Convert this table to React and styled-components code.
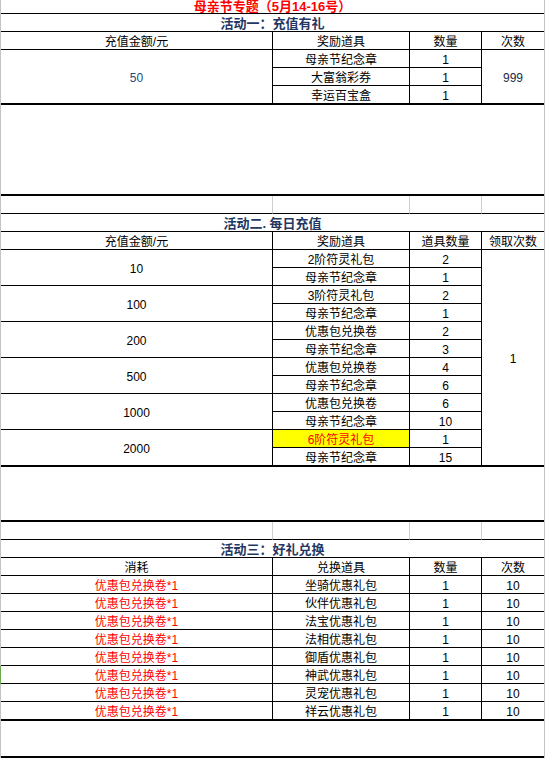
import React from "react";
import styled, { createGlobalStyle } from "styled-components";

const GlobalStyle = createGlobalStyle`
  html, body {
    margin: 0;
    padding: 0;
    background: #ffffff;
  }
`;

const FONT = `"Liberation Sans", "Noto Sans CJK SC", sans-serif`;

const activity2 = [
  { amount: "10", items: [["2阶符灵礼包", "2"], ["母亲节纪念章", "1"]] },
  { amount: "100", items: [["3阶符灵礼包", "2"], ["母亲节纪念章", "1"]] },
  { amount: "200", items: [["优惠包兑换卷", "2"], ["母亲节纪念章", "3"]] },
  { amount: "500", items: [["优惠包兑换卷", "4"], ["母亲节纪念章", "6"]] },
  { amount: "1000", items: [["优惠包兑换卷", "6"], ["母亲节纪念章", "10"]] },
  { amount: "2000", items: [["6阶符灵礼包", "1", true], ["母亲节纪念章", "15"]] },
];

const exchange = [
  "坐骑优惠礼包",
  "伙伴优惠礼包",
  "法宝优惠礼包",
  "法相优惠礼包",
  "御盾优惠礼包",
  "神武优惠礼包",
  "灵宠优惠礼包",
  "祥云优惠礼包",
];

export default function App() {
  return (
    <>
      <GlobalStyle />
      <Sheet>
        <PageTitle>母亲节专题（5月14-16号）</PageTitle>
        <SectionTitle>活动一：充值有礼</SectionTitle>
        <Grid>
          <Cell>充值金额/元</Cell>
          <Cell>奖励道具</Cell>
          <Cell>数量</Cell>
          <Cell $last>次数</Cell>

          <Cell $span={3} $color="#244a7c">50</Cell>
          <Cell>母亲节纪念章</Cell>
          <Cell>1</Cell>
          <Cell $span={3} $last $color="#1b2b45">999</Cell>
          <Cell>大富翁彩券</Cell>
          <Cell>1</Cell>
          <Cell>幸运百宝盒</Cell>
          <Cell>1</Cell>
        </Grid>
        <Spacer $height={89} />

        <BlankRow />
        <SectionTitle>活动二. 每日充值</SectionTitle>
        <Grid>
          <Cell>充值金额/元</Cell>
          <Cell>奖励道具</Cell>
          <Cell>道具数量</Cell>
          <Cell $last>领取次数</Cell>
          {activity2.map((group, gi) => (
            <React.Fragment key={group.amount}>
              <Cell $span={2}>{group.amount}</Cell>
              {group.items.map(([name, qty, hot], ii) => (
                <React.Fragment key={name + ii}>
                  <Cell $color={hot ? "#ff0000" : undefined} $bg={hot ? "#ffff00" : undefined}>
                    {name}
                  </Cell>
                  <Cell>{qty}</Cell>
                  {gi === 0 && ii === 0 && (
                    <Cell $span={12} $last>
                      1
                    </Cell>
                  )}
                </React.Fragment>
              ))}
            </React.Fragment>
          ))}
        </Grid>
        <Spacer $height={53} />

        <BlankRow />
        <SectionTitle>活动三：好礼兑换</SectionTitle>
        <Grid>
          <Cell>消耗</Cell>
          <Cell>兑换道具</Cell>
          <Cell>数量</Cell>
          <Cell $last>次数</Cell>
          {exchange.map((name, i) => (
            <React.Fragment key={name}>
              <Cell $color="#ff0000" $marked={i === 5}>
                优惠包兑换卷*1
              </Cell>
              <Cell>{name}</Cell>
              <Cell>1</Cell>
              <Cell $last>10</Cell>
            </React.Fragment>
          ))}
        </Grid>
        <Spacer $height={35} />
      </Sheet>
    </>
  );
}

function BlankRow() {
  return (
    <Grid>
      <Cell $ghost />
      <Cell $ghost />
      <Cell $ghost />
      <Cell $ghost $last />
    </Grid>
  );
}

const Sheet = styled.div`
  width: 545px;
  box-sizing: border-box;
  border-left: 1px solid #c3c3c3;
  border-right: 1px solid #c3c3c3;
  background: #ffffff;
  font-family: ${FONT};
  font-size: 12px;
  color: #000000;
`;

const PageTitle = styled.div`
  height: 14px;
  box-sizing: border-box;
  border-bottom: 1px solid #000000;
  display: flex;
  align-items: center;
  justify-content: center;
  font-size: 13px;
  font-weight: bold;
  line-height: 13px;
  color: #ff0000;
`;

const SectionTitle = styled.div`
  height: 18px;
  box-sizing: border-box;
  border-bottom: 1px solid #000000;
  display: flex;
  align-items: center;
  justify-content: center;
  padding-top: 2px;
  font-size: 13px;
  font-weight: bold;
  line-height: 15px;
  color: #1f3864;
  white-space: pre;
`;

const Grid = styled.div`
  display: grid;
  grid-template-columns: 272px 137px 72px 62px;
  grid-auto-rows: 18px;
`;

const Cell = styled.div`
  grid-row: span ${({ $span }) => $span || 1};
  box-sizing: border-box;
  display: flex;
  align-items: center;
  justify-content: center;
  padding-top: 3px;
  line-height: 14px;
  white-space: nowrap;
  overflow: hidden;
  border-bottom: 1px solid #000000;
  border-right: ${({ $last, $ghost }) =>
    $last ? "none" : $ghost ? "1px solid #cfcfcf" : "1px solid #000000"};
  background: ${({ $bg }) => $bg || "transparent"};
  color: ${({ $color }) => $color || "#000000"};
  box-shadow: ${({ $marked }) => ($marked ? "-1px 0 0 #6aa84f" : "none")};
`;

const Spacer = styled.div`
  height: ${({ $height }) => $height}px;
  border-top: 1px solid #000000;
  border-bottom: 2px solid #000000;
`;
